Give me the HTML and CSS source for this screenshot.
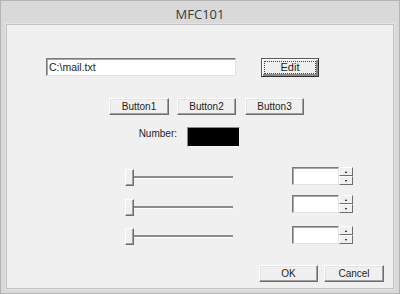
FILE: index.html
```html
<!DOCTYPE html>
<html lang="en">
<head>
  <meta charset="UTF-8" />
  <title>MFC101</title>
  <link rel="stylesheet" href="styles.css">
</head>
<body>

<div class="window">
  <div class="title">MFC101</div>

  <div class="client">
    <div class="row row-path">
      <div class="edit path">C:\mail.txt</div>
      <button class="btn btn-default edit-btn"><span>Edit</span></button>
    </div>

    <div class="row row-buttons">
      <button class="btn b1">Button1</button>
      <button class="btn b2">Button2</button>
      <button class="btn b3">Button3</button>
    </div>

    <div class="row row-number">
      <div class="label">Number:</div>
      <div class="number"></div>
    </div>

    <div class="row row-slider s1">
      <div class="slider"><div class="thumb"></div><div class="track"></div></div>
      <div class="spin">
        <div class="edit spin-edit"></div>
        <div class="spin-btns"><div class="arrow up"></div><div class="arrow down"></div></div>
      </div>
    </div>

    <div class="row row-slider s2">
      <div class="slider"><div class="thumb"></div><div class="track"></div></div>
      <div class="spin">
        <div class="edit spin-edit"></div>
        <div class="spin-btns"><div class="arrow up"></div><div class="arrow down"></div></div>
      </div>
    </div>

    <div class="row row-slider s3">
      <div class="slider"><div class="thumb"></div><div class="track"></div></div>
      <div class="spin">
        <div class="edit spin-edit"></div>
        <div class="spin-btns"><div class="arrow up"></div><div class="arrow down"></div></div>
      </div>
    </div>

    <div class="row row-footer">
      <button class="btn ok">OK</button>
      <button class="btn cancel">Cancel</button>
    </div>
  </div>
</div>

</body>
</html>
```

FILE: styles.css
```css
html, body {
  margin: 0;
  padding: 0;
}
body {
  font-family: "Liberation Sans", Arial, sans-serif;
  font-size: 10px;
  color: #1e1e1e;
  background: #d9d9d9;
}
.window {
  width: 400px;
  height: 294px;
  box-sizing: border-box;
  background: #d9d9d9;
  border: 1px solid #b4b4b4;
  padding: 0 5px 5px 5px;
}
.title {
  height: 23px;
  line-height: 26px;
  text-align: center;
  font-family: "Open Sans", "Noto Sans", sans-serif;
  font-size: 13px;
  color: #3a3a3a;
}
.client {
  height: 265px;
  box-sizing: border-box;
  background: #f0f0f0;
  border: 1px solid #c2c2c2;
  box-shadow: 0 0 0 1px #e4e4e4;
  display: flex;
  flex-direction: column;
}
.row {
  display: flex;
  align-items: flex-start;
}

/* controls */
.btn {
  font-family: inherit;
  font-size: 10px;
  color: #1e1e1e;
  background: #f0f0f0;
  border: 1px solid;
  border-color: #fff #6d6d6d #6d6d6d #fff;
  box-shadow: inset -1px -1px 0 #a0a0a0, inset 1px 1px 0 #e3e3e3;
  padding: 0;
  height: 17px;
  box-sizing: border-box;
}
.btn-default {
  border-color: #5a5a5a #2e2e2e #2e2e2e #5a5a5a;
  box-shadow: inset 1px 1px 0 #fff, inset -2px -2px 0 #8a8a8a;
  padding: 2px;
}
.btn-default span {
  display: block;
  height: 100%;
  box-sizing: border-box;
  border: 1px dotted #444;
  line-height: 11px;
  font-size: 11px;
}
.edit {
  background: #fff;
  border: 1px solid;
  border-color: #7a7a7a #e3e3e3 #e3e3e3 #7a7a7a;
  box-shadow: inset 1px 1px 0 #a8a8a8;
  box-sizing: border-box;
}

.row-path { margin-top: 33px; }
.path {
  margin-left: 39px;
  width: 190px;
  height: 18px;
  line-height: 16px;
  padding-left: 2px;
  font-size: 10.5px;
}
.edit-btn {
  margin-left: 25px;
  width: 58px;
  height: 19px;
}

.row-buttons { margin-top: 21px; }
.b1 { margin-left: 102px; width: 60px; }
.b2 { margin-left: 8px; width: 59px; }
.b3 { margin-left: 9px; width: 59px; }

.row-number { margin-top: 12px; }
.label {
  width: 170px;
  text-align: right;
  padding-top: 1px;
  line-height: 12px;
}
.number {
  margin-left: 10px;
  width: 53px;
  height: 20px;
  box-sizing: border-box;
  background: #000;
  border: 1px solid;
  border-color: #8a8a8a #f6f6f6 #f6f6f6 #8a8a8a;
}

.slider {
  margin-left: 118px;
  width: 108px;
  display: flex;
  align-items: flex-start;
}
.thumb {
  width: 9px;
  height: 17px;
  box-sizing: border-box;
  background: #f0f0f0;
  border: 1px solid;
  border-color: #fff #6d6d6d #6d6d6d #fff;
  box-shadow: inset -1px -1px 0 #a0a0a0;
}
.track {
  flex: 1;
  height: 2px;
  background: #8c8c8c;
  border-bottom: 1px solid #fff;
}
.spin {
  margin-left: 59px;
  display: flex;
}
.spin-edit {
  width: 47px;
  height: 18px;
}
.spin-btns {
  width: 14px;
  display: flex;
  flex-direction: column;
}
.arrow {
  height: 9px;
  box-sizing: border-box;
  background: #f0f0f0;
  border: 1px solid;
  border-color: #fff #6d6d6d #6d6d6d #fff;
  display: flex;
  align-items: center;
  justify-content: center;
}
.arrow::after {
  content: "";
  width: 0;
  height: 0;
  border-left: 1.5px solid transparent;
  border-right: 1.5px solid transparent;
}
.up::after { border-bottom: 2px solid #000; }
.down::after { border-top: 2px solid #000; }

.s1 { margin-top: 20px; }
.s1 .thumb { margin-top: 2px; }
.s1 .track { margin-top: 9px; }
.s2 { margin-top: 9px; }
.s2 .thumb { margin-top: 4px; }
.s2 .track { margin-top: 11px; }
.s3 { margin-top: 10px; }
.s3 .thumb { margin-top: 2px; }
.s3 .track { margin-top: 9px; }

.row-footer { margin-top: 20px; }
.ok { margin-left: 252px; width: 59px; }
.cancel { margin-left: 6px; width: 60px; }
```
